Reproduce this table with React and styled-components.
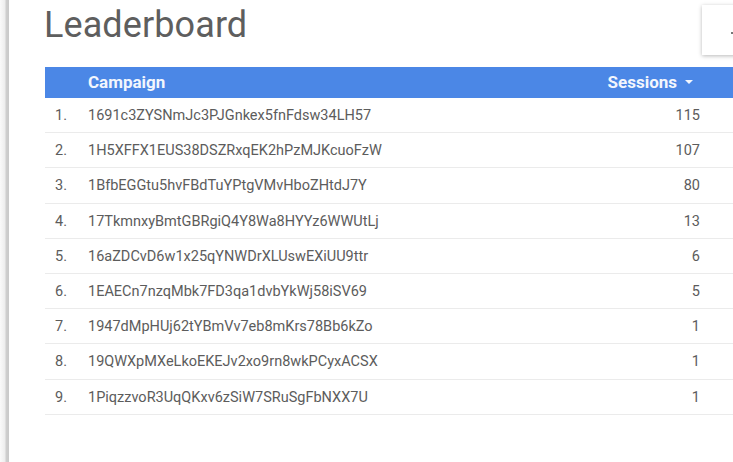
import React from 'react';
import styled, { createGlobalStyle } from 'styled-components';

const GlobalStyle = createGlobalStyle`
	html, body {
		margin: 0;
		padding: 0;
		background: #fff;
		font-family: Roboto, "Liberation Sans", Arial, sans-serif;
	}
`;

const Page = styled.div`
	display: flex;
	width: 733px;
	height: 462px;
	overflow: hidden;
	position: relative;
	background: #fff;
`;

const SideEdge = styled.div`
	flex: 0 0 10px;
	height: 100%;
	background: linear-gradient(to right, #fafafa 0, #ededed 5px, #cfcfcf 6px, #c9c9c9 9px, #fff 9px);
`;

const Content = styled.div`
	flex: 1;
	padding: 4px 0 0 34px;
	min-width: 0;
`;

const Title = styled.h1`
	margin: 0;
	font-size: 36px;
	font-weight: 400;
	line-height: 42px;
	color: #5e5e5e;
	letter-spacing: 0.1px;
`;

const Table = styled.div`
	margin-top: 21px;
	width: 700px;
	margin-left: 1px;
`;

const HeaderRow = styled.div`
	display: flex;
	align-items: center;
	height: 31px;
	box-sizing: border-box;
	padding-bottom: 2px;
	background: #4b87e6;
	color: #f2f6fd;
	font-size: 17px;
	font-weight: 700;
`;

const Row = styled.div`
	display: flex;
	align-items: center;
	height: 35.2px;
	box-sizing: border-box;
	padding-top: 1px;
	border-bottom: 1px solid #ebebeb;
	font-size: 14.5px;
	color: #5c5c5c;
`;

const IndexCell = styled.div`
	flex: 0 0 43px;
	padding-left: 10px;
	box-sizing: border-box;
`;

const NameCell = styled.div`
	flex: 1;
	white-space: nowrap;
`;

const ValueCell = styled.div`
	flex: 0 0 auto;
	padding-right: ${({ header }) => (header ? '52px' : '45px')};
	text-align: right;
	display: flex;
	align-items: center;
	gap: 8px;
`;

const SortArrow = styled.span`
	width: 0;
	height: 0;
	border-left: 4px solid transparent;
	border-right: 4px solid transparent;
	border-top: 4px solid #f2f6fd;
	margin-top: 1px;
`;

const FloatCard = styled.div`
	position: absolute;
	top: 5px;
	left: 702px;
	width: 60px;
	height: 50px;
	background: #fff;
	box-shadow: 0 1px 4px rgba(0, 0, 0, 0.28);
`;

const CardMark = styled.span`
	position: absolute;
	top: 27px;
	left: 29px;
	width: 2px;
	height: 2px;
	background: #777;
`;

const rows = [
	['1691c3ZYSNmJc3PJGnkex5fnFdsw34LH57', 115],
	['1H5XFFX1EUS38DSZRxqEK2hPzMJKcuoFzW', 107],
	['1BfbEGGtu5hvFBdTuYPtgVMvHboZHtdJ7Y', 80],
	['17TkmnxyBmtGBRgiQ4Y8Wa8HYYz6WWUtLj', 13],
	['16aZDCvD6w1x25qYNWDrXLUswEXiUU9ttr', 6],
	['1EAECn7nzqMbk7FD3qa1dvbYkWj58iSV69', 5],
	['1947dMpHUj62tYBmVv7eb8mKrs78Bb6kZo', 1],
	['19QWXpMXeLkoEKEJv2xo9rn8wkPCyxACSX', 1],
	['1PiqzzvoR3UqQKxv6zSiW7SRuSgFbNXX7U', 1],
];

export default function App() {
	return (
		<>
			<GlobalStyle />
			<Page>
				<SideEdge />
				<Content>
					<Title>Leaderboard</Title>
					<Table>
						<HeaderRow>
							<IndexCell />
							<NameCell>Campaign</NameCell>
							<ValueCell header>
								Sessions <SortArrow />
							</ValueCell>
						</HeaderRow>
						{rows.map(([name, sessions], i) => (
							<Row key={name}>
								<IndexCell>{i + 1}.</IndexCell>
								<NameCell>{name}</NameCell>
								<ValueCell>{sessions}</ValueCell>
							</Row>
						))}
					</Table>
				</Content>
				<FloatCard>
					<CardMark />
				</FloatCard>
			</Page>
		</>
	);
}
